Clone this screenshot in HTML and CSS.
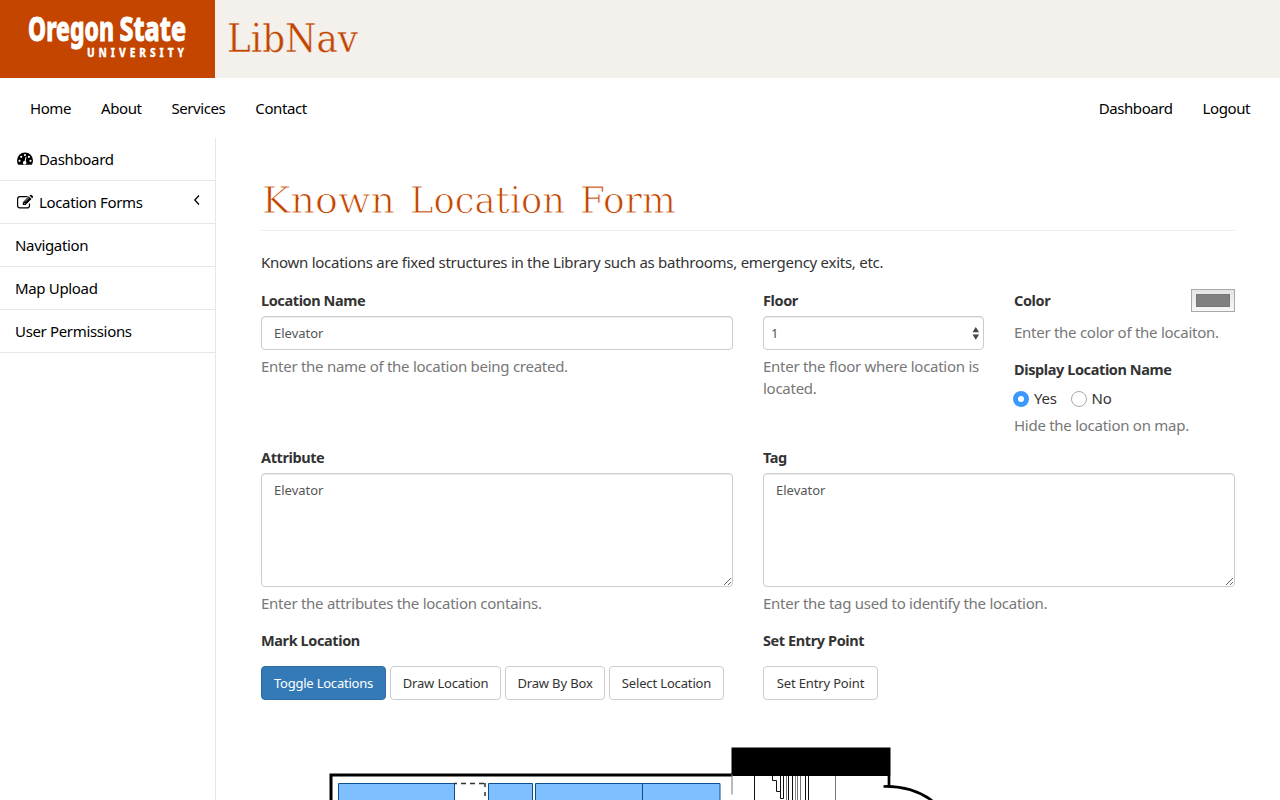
FILE: index.html
```
<!DOCTYPE html>
<html lang="en">
<head>
<meta charset="utf-8">
<title>LibNav</title>
<link rel="stylesheet" href="styles.css">
</head>
<body>
<header class="banner">
  <a class="logo">
    <svg width="215" height="78" viewBox="0 0 215 78" fill="#fff" stroke="#fff" font-family="Noto Sans" font-weight="800">
      <text x="28" y="41.300" font-size="33.500" stroke-width=".9" textLength="86" lengthAdjust="spacingAndGlyphs">Oregon</text>
      <text x="119.500" y="41.300" font-size="33.500" stroke-width=".9" textLength="66.500" lengthAdjust="spacingAndGlyphs">State</text>
      <g font-size="13" stroke-width=".3" transform="translate(87 57) scale(.78 1)"><text x="0" y="0" textLength="124.500" lengthAdjust="spacing">UNIVERSITY</text></g>
    </svg>
  </a>
  <svg class="brand" width="160" height="70" viewBox="0 0 160 70"><text x="1" y="52" textLength="131" lengthAdjust="spacingAndGlyphs">LibNav</text></svg>
</header>
<nav class="topnav">
  <div class="links"><a>Home</a><a>About</a><a>Services</a><a>Contact</a></div>
  <div class="links"><a>Dashboard</a><a>Logout</a></div>
</nav>
<div class="page">
  <aside class="side">
    <a class="item"><svg class="ico" width="18" height="16" viewBox="0 0 18 16"><path d="M1 9.500a8 8 0 0 1 16 0c0 1.600-.4 3-1.200 4.300H2.200A8 8 0 0 1 1 9.500z"/><g fill="#fff"><circle cx="3.500" cy="9.800" r="1.100"/><circle cx="5.200" cy="5.800" r="1.100"/><circle cx="9" cy="4.100" r="1.100"/><circle cx="12.900" cy="5.800" r="1.100"/><circle cx="14.500" cy="9.800" r="1.100"/><path d="M9.600 5.800l.9.3-.8 4.200a1.800 1.800 0 1 1-1.100-.3z"/></g></svg>Dashboard</a>
    <a class="item"><svg class="ico" width="18" height="16" viewBox="0 0 18 16"><path d="M11.500 2.700H4A2.500 2.500 0 0 0 1.600 5.200v6.200A2.500 2.500 0 0 0 4 13.900h7a2.500 2.500 0 0 0 2.500-2.500V9.500" fill="none" stroke="#000" stroke-width="1.200"/><path d="M6.800 8.300l6-6 2.700 2.700-6 6H6.800zM13.500 1.600l.8-.7c.4-.3.800-.3 1.200 0l1.400 1.400c.3.4.3.8 0 1.200l-.7.800z"/><path d="M7.800 8.600l1.400 1.400M9 7.600l4.200-4.200" stroke="#fff" stroke-width=".7"/></svg>Location Forms<svg class="chev" width="8" height="12" viewBox="0 0 8 12"><path d="M6 1.500L1.800 6 6 10.500" fill="none" stroke="#000" stroke-width="1.300"/></svg></a>
    <a class="item">Navigation</a>
    <a class="item">Map Upload</a>
    <a class="item">User Permissions</a>
  </aside>
  <main class="main">
    <h1 class="title"><svg width="420" height="60" viewBox="0 0 420 60"><text x="1" y="42.500" textLength="133" lengthAdjust="spacingAndGlyphs">Known</text><text x="149" y="42.500" textLength="155" lengthAdjust="spacingAndGlyphs">Location</text><text x="319" y="42.500" textLength="96" lengthAdjust="spacingAndGlyphs">Form</text></svg></h1>
    <p class="intro">Known locations are fixed structures in the Library such as bathrooms, emergency exits, etc.</p>
    <div class="row first">
      <div class="half"><label>Location Name</label><input class="control" type="text" value="Elevator"><p class="help">Enter the name of the location being created.</p></div>
      <div class="quarter"><label>Floor</label><div class="control select">1<svg width="8" height="13" viewBox="0 0 8 13"><path d="M.5 5.300L3.800 0l3.300 5.300zM.5 7.500h6.600L3.800 12.800z" fill="#444"/></svg></div><p class="help">Enter the floor where location is located.</p></div>
      <div class="quarter">
        <div class="colorline"><label>Color</label><span class="swatch"><i></i></span></div>
        <p class="help color-help">Enter the color of the locaiton.</p>
        <label>Display Location Name</label>
        <div class="radios"><span class="radio on"></span><span class="yes">Yes</span><span class="radio"></span><span>No</span></div>
        <p class="help radio-help">Hide the location on map.</p>
      </div>
    </div>
    <div class="row second">
      <div class="half"><label>Attribute</label><textarea class="control area">Elevator</textarea><p class="help">Enter the attributes the location contains.</p></div>
      <div class="half"><label>Tag</label><textarea class="control area">Elevator</textarea><p class="help">Enter the tag used to identify the location.</p></div>
    </div>
    <div class="row third">
      <div class="half"><label>Mark Location</label><div class="buttons"><button class="btn primary b1">Toggle Locations</button><button class="btn b2">Draw Location</button><button class="btn b3">Draw By Box</button><button class="btn b4">Select Location</button></div></div>
      <div class="half"><label>Set Entry Point</label><div class="buttons"><button class="btn b5">Set Entry Point</button></div></div>
    </div>
    <svg class="map" width="974" height="100" viewBox="261 700 974 100" fill="none">
      <path d="M331 801V775H732" stroke="#000" stroke-width="3"/>
      <path d="M731.500 747.500H890.500V776H731.500z" fill="#000"/>
      <g fill="#80bfff" stroke="#0c4f8f"><path d="M338.500 783.500H454.500V805H338.500zM488.500 783.500H532.500V805H488.500zM535.500 783.500H720V805H535.500zM642.500 783.500V805"/></g>
      <path d="M454 783.500H485.500" stroke="#333" stroke-width="1.300" stroke-dasharray="5 4" stroke-dashoffset="2"/><path d="M485 783V801" stroke="#111" stroke-width="1.300" stroke-dasharray="4 5"/>
      <path d="M732 774V794.500M835.500 776V800M786.500 776V800M797.500 776V800M800.500 776V800" stroke="#777"/>
      <path d="M754.500 776V800M772.500 776V780.500H776.500V791.500H780.500V798.500H783.500V776M780.500 776V792M788.500 776V800M792.500 776V800M805.500 776V800M808.500 776V800" stroke="#111"/>
      <path d="M795.500 776V800" stroke="#888"/>
      <path d="M889 776V786M883.500 786.500C900 786 917 790 932 800.500" stroke="#000" stroke-width="2.700"/>
    </svg>
  </main>
</div>
</body>
</html>
```
FILE: styles.css
```
* { box-sizing: border-box; }
html, body { height: 100%; }
body { margin: 0; overflow: hidden; background: #fff; color: #333; font: 15px/22px "Noto Sans", sans-serif; letter-spacing: -.27px; }
svg { display: block; flex: none; letter-spacing: 0; }
.banner { height: 78px; background: #f4f1ec; display: flex; }
.logo { width: 215px; height: 78px; background: #c34500; }
.brand { margin-left: 11px; }
.brand text { font: 39px "DejaVu Serif", serif; fill: #c34500; stroke: #f4f1ec; stroke-width: .4px; }
.topnav { height: 60px; padding: 0 15px; display: flex; justify-content: space-between; align-items: center; color: #000; letter-spacing: -.42px; }
.links { display: flex; }
.links a { padding: 0 15px; }
.page { display: flex; height: 662px; }
.side { width: 216px; flex: none; border-right: 1px solid #e7e7e7; color: #000; letter-spacing: -.34px; }
.item { display: flex; align-items: center; height: 43px; padding: 0 13px 0 15px; border-bottom: 1px solid #e7e7e7; }
.ico { margin: 0 5px 0 1px; }
.chev { margin: -5px 1px 0 auto; }
.main { flex: 1; padding: 32px 45px 0; }
.title { margin: 0; height: 61px; border-bottom: 1px solid #eee; }
.title text { font: 37px "DejaVu Serif", serif; fill: #c34500; stroke: #fff; stroke-width: .9px; }
.intro { margin: 20px 0 16px; white-space: nowrap; }
.row { display: flex; gap: 30px; }
.half { width: 472px; flex: none; }
.quarter { width: 221px; flex: none; }
label { display: block; font-weight: 700; font-size: 14.5px; letter-spacing: -.4px; height: 22px; white-space: nowrap; }
.control { display: block; width: 100%; height: 34px; margin: 5px 0 0; padding: 6px 12px; border: 1px solid #ccc; border-radius: 4px; background: #fff; color: #555; font: 13px/20px "Noto Sans", sans-serif; letter-spacing: 0; box-shadow: inset 0 1px 1px rgba(0,0,0,.075); }
.select { display: flex; justify-content: space-between; align-items: center; padding: 0 3px 0 7px; }
.area { height: 114px; resize: vertical; }
.help { margin: 5px 0 0; color: #777; }
.first { height: 157px; }
.colorline { display: flex; justify-content: space-between; align-items: flex-start; height: 22px; }
.swatch { width: 44px; height: 23px; padding: 4px; border: 1px solid #a9a9a9; background: linear-gradient(#e4e4e4, #f8f8f8); }
.swatch i { display: block; height: 13px; background: #808080; border: 1px solid #777; }
.color-help { margin: 10px 0 15px; }
.radios { display: flex; align-items: center; height: 22px; margin-top: 7px; }
.radio { width: 16px; height: 16px; margin: 2px 5px 0 0; border: 1px solid #aaa; border-radius: 50%; }
.on { border: 5px solid #3b99fc; margin-left: -1px; }
.yes { margin-right: 14px; }
.radio-help { margin-top: 5px; }
.second { height: 183px; }
.buttons { display: flex; gap: 4px; margin-top: 15px; }
.btn { height: 34px; padding: 0; border: 1px solid #ccc; border-radius: 4px; background: #fff; color: #333; font: 13px/20px "Noto Sans", sans-serif; letter-spacing: -.15px; white-space: nowrap; }
.primary { background: #337ab7; border-color: #2e6da4; color: #fff; letter-spacing: -.22px; }
.b1 { width: 125px; } .b2 { width: 111px; } .b3 { width: 100px; } .b4 { width: 115px; } .b5 { width: 115px; }
```
